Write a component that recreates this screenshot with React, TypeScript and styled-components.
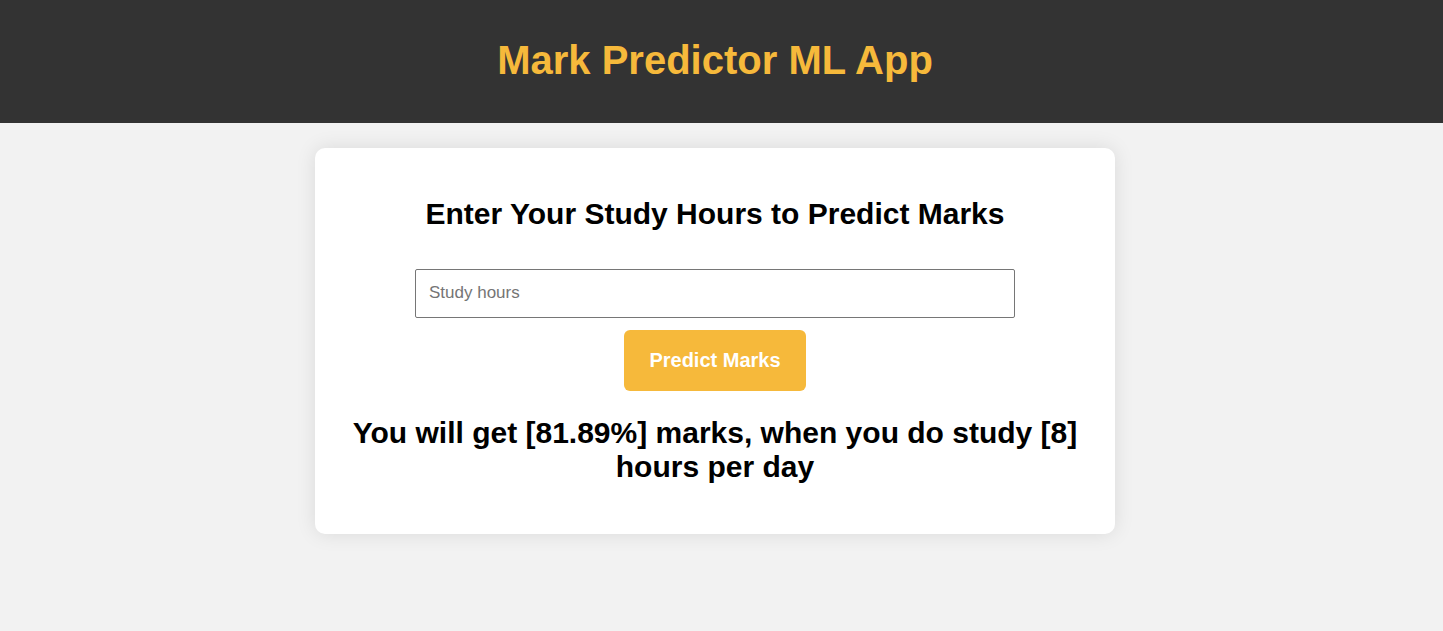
import React from "react";
import styled, { createGlobalStyle } from "styled-components";

const GlobalStyle = createGlobalStyle`
  body {
    margin: 0;
    background: #f2f2f2;
    color: #000;
    font-family: "Liberation Sans", Arial, sans-serif;
  }
`;

const Page = styled.div`
  padding-right: 13px;
`;

const Header = styled.header`
  margin-right: -13px;
  padding: 10px 23px 10px 10px;
  background: #333;
  text-align: center;
`;

const Title = styled.h1`
  margin: 26px 0 29px;
  color: #f6b93b;
  font-size: 40px;
  line-height: 48px;
`;

const Card = styled.main`
  box-sizing: border-box;
  max-width: 800px;
  margin: 25px auto;
  padding: 20px;
  border-radius: 10px;
  background: #fff;
  box-shadow: 0 0 20px rgba(0, 0, 0, 0.1);
  text-align: center;
`;

const Heading = styled.h2`
  margin: 29px 0 38px;
  font-size: 30px;
  line-height: 34px;
`;

const Form = styled.form`
  display: flex;
  flex-direction: column;
  align-items: center;
  gap: 12px;
`;

const HoursInput = styled.input`
  box-sizing: border-box;
  width: 600px;
  max-width: 100%;
  height: 49px;
  padding: 11px 13px 13px;
  border: 1px solid #767676;
  border-radius: 2px;
  font-family: inherit;
  font-size: 17px;

  &::placeholder {
    color: #757575;
  }
`;

const PredictButton = styled.button`
  padding: 19px 25px;
  border: 0;
  border-radius: 6px;
  background: #f6b93b;
  color: #fff;
  font-family: inherit;
  font-size: 20px;
  font-weight: bold;
  line-height: 23px;
  cursor: pointer;
`;

const Result = styled.h2`
  margin: 25px 0 30px;
  font-size: 30px;
  line-height: 34px;
`;

export default function App() {
  return (
    <>
      <GlobalStyle />
      <Page>
        <Header>
          <Title>Mark Predictor ML App</Title>
        </Header>
        <Card>
          <Heading>Enter Your Study Hours to Predict Marks</Heading>
          <Form onSubmit={(event) => event.preventDefault()}>
            <HoursInput type="text" placeholder="Study hours" aria-label="Study hours" />
            <PredictButton type="submit">Predict Marks</PredictButton>
          </Form>
          <Result>You will get [81.89%] marks, when you do study [8] hours per day</Result>
        </Card>
      </Page>
    </>
  );
}
